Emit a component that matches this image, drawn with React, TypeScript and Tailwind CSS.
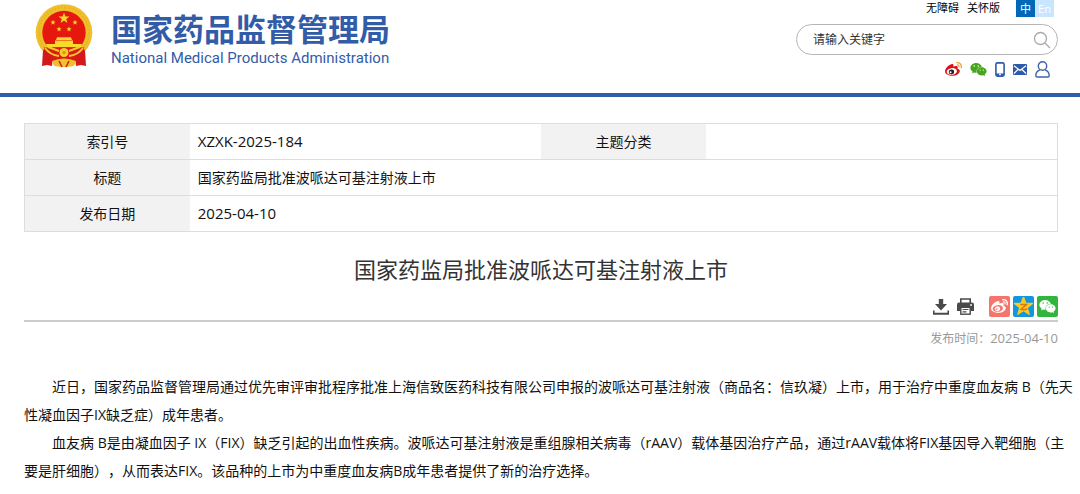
import { FaWeixin } from "react-icons/fa";

const CJK = "font-['Open_Sans','Noto_Sans_CJK_SC',sans-serif]";

const STAR =
  "M0 -10 L2.4 -3.2 L9.5 -3.1 L3.8 1.2 L5.9 8.1 L0 4 L-5.9 8.1 L-3.8 1.2 L-9.5 -3.1 L-2.4 -3.2 Z";

const WEIBO_BODY =
  "M214.8 446.7C108.5 446.7 0 395.3 0 310.4c0-44.3 28-95.4 76.3-143.7C176 67 279.5 65.8 249.9 161c-4 13.1 12.3 5.7 12.3 6 79.5-33.6 140.5-16.8 114 51.4-3.7 9.4 1.1 10.9 8.3 13.1 135.7 42.3 34.8 215.2-169.7 215.2zm143.7-146.3c-5.4-55.7-78.5-94-163.4-85.7-84.8 8.6-148.8 60.3-143.4 116s78.5 94 163.4 85.7c84.8-8.6 148.8-60.3 143.4-116zM269.4 346.1c-17.1 38.8-66.8 60-109.1 46.3-40.8-13.1-58-53.4-40.3-89.7 17.7-35.4 63.1-55.4 103.4-45.1 42 10.8 63.1 50.2 46 88.5zm-86.3-30c-12.9-5.4-30 .3-38 12.9-8.3 12.9-4.3 28 8.6 34 13.1 6 30.8.3 39.1-12.9 8-13.1 3.7-28.3-9.7-34zm32.6-13.4c-5.1-1.7-11.4.6-14.3 5.4-2.9 5.1-1.4 10.6 3.7 12.9 5.1 2 11.7-.3 14.6-5.4 2.8-5.2 1.1-10.9-4-12.9z";

const WEIBO_WAVES =
  "M407 177.6c7.6-24-13.4-46.8-37.4-41.7-22 4.8-28.8-28.1-7.1-32.8 50.1-10.9 92.3 37.1 76.5 84.8-6.8 21.2-38.8 10.8-32-10.3zM347.9 35.1c-25.9 5.6-16.8 43.7 8.3 38.3 72.3-15.2 134.8 52.8 111.7 124-7.4 24.2 29.1 37 37.4 12 31.9-99.8-55.1-195.9-157.4-174.3z";

interface WeiboIconProps {
  size: number;
  body: string;
  waves: string;
  pupil?: string;
}

function WeiboIcon({ size, body, waves, pupil }: WeiboIconProps) {
  return (
    <svg width={size} height={size} viewBox="0 0 512 512" aria-hidden="true">
      <path d={WEIBO_BODY} fill={body} />
      {pupil && (
        <ellipse cx="195" cy="328" rx="78" ry="68" fill={pupil} />
      )}
      {pupil && <circle cx="169" cy="340" r="28" fill="#fff" />}
      <path d={WEIBO_WAVES} fill={waves} />
    </svg>
  );
}

function Emblem() {
  return (
    <svg width="58" height="64" viewBox="0 0 58 64" aria-hidden="true">
      <circle cx="29" cy="28.5" r="28.300" fill="#efc02c" />
      <circle
        cx="29"
        cy="28.5"
        r="25"
        fill="none"
        stroke="#dd9a16"
        strokeWidth="2"
        strokeDasharray="1 2"
        opacity="0.45"
      />
      <circle cx="29" cy="28.5" r="21.700" fill="#e5170f" />
      <g fill="#f9d92b">
        <path d={STAR} transform="translate(29 14.300) scale(.58)" />
        <path d={STAR} transform="translate(18 18.500) scale(.28)" />
        <path d={STAR} transform="translate(40 18.500) scale(.28)" />
        <path d={STAR} transform="translate(24 25.200) scale(.28)" />
        <path d={STAR} transform="translate(34 25.200) scale(.28)" />
        <path d="M22 33.300 H36 L37 36 H21 Z" />
        <path d="M20 36.500 H38 V40 H47 L46 43.300 H12 L11 40 H20 Z" />
      </g>
      {/* ribbon and gear under the gate */}
      <path d="M9 43.500 H49 L50 54 L41 58 H17 L8 54 Z" fill="#dd1a14" />
      <path d="M8 46 L18 51 L17 62 L12 61 L7 62 Z" fill="#d3191c" />
      <path d="M50 46 L40 51 L41 62 L46 61 L51 62 Z" fill="#d3191c" />
      <path
        d="M10 44 Q15 51 24 52 M48 44 Q43 51 34 52 M13 43 L24 47 M45 43 L34 47"
        fill="none"
        stroke="#f5cb2c"
        strokeWidth="2"
      />
      <circle cx="29" cy="48.500" r="4.500" fill="#f5cb2c" />
      <circle cx="29" cy="48.500" r="1.600" fill="#d98f10" />
      <path d="M17 57 Q29 52 41 57 L39 62 Q29 64 19 62 Z" fill="#efc02c" />
      <path d="M24 57 L27 63 M34 57 L31 63" stroke="#d3191c" strokeWidth="1.500" />
    </svg>
  );
}

function SearchIcon() {
  return (
    <svg width="18" height="18" viewBox="0 0 18 18" fill="none" stroke="#aaa" strokeWidth="1.300" aria-hidden="true">
      <circle cx="7.500" cy="7.500" r="6" />
      <path d="M12 12 L17 17" />
    </svg>
  );
}

function PhoneIcon() {
  return (
    <svg width="10" height="15" viewBox="0 0 10 15" aria-hidden="true">
      <rect x=".9" y=".9" width="8.200" height="13.200" rx="1.500" fill="#fff" stroke="#2e5ba8" strokeWidth="1.600" />
      <path d="M1 11.500 H9 V14 H1 Z" fill="#2e5ba8" />
      <circle cx="5" cy="12.500" r=".9" fill="#fff" />
    </svg>
  );
}

function MailIcon() {
  return (
    <svg width="14" height="11" viewBox="0 0 14 11" aria-hidden="true">
      <rect width="14" height="11" rx="1" fill="#2e5ba8" />
      <path d="M1 1.800 L7 6.500 L13 1.800 M1 9.500 L5 5.500 M13 9.500 L9 5.500" fill="none" stroke="#fff" strokeWidth="1.200" />
    </svg>
  );
}

function UserIcon() {
  return (
    <svg width="15" height="17" viewBox="0 0 15 17" fill="none" stroke="#3f64a9" strokeWidth="1.400" aria-hidden="true">
      <circle cx="7.500" cy="5" r="4.200" />
      <path d="M4.800 8.800 C2 10 .8 12.500 .8 14.500 Q.8 16 2.200 16 H12.800 Q14.200 16 14.200 14.500 C14.200 12.500 13 10 10.200 8.800" />
    </svg>
  );
}

function DownloadIcon() {
  return (
    <svg width="16" height="16" viewBox="0 0 16 16" fill="#4a4a4a" aria-hidden="true">
      <path d="M5.800 0 H10.200 V5 H14 L8 11.500 L2 5 H5.800 Z" />
      <path d="M0 11.500 H1.600 V13.800 H14.400 V11.500 H16 V15.700 H0 Z" />
    </svg>
  );
}

function PrintIcon() {
  return (
    <svg width="17" height="17" viewBox="0 0 17 17" aria-hidden="true">
      <path d="M3.800 5 V1 H13.200 V5" fill="#fff" stroke="#4a4a4a" strokeWidth="1.600" />
      <path d="M2 4.500 H15 Q17 4.500 17 6.500 V13 H0 V6.500 Q0 4.500 2 4.500 Z" fill="#4a4a4a" />
      <circle cx="14" cy="7" r=".9" fill="#fff" />
      <rect x="3.800" y="9.300" width="9.400" height="6.900" fill="#fff" stroke="#4a4a4a" strokeWidth="1.400" />
      <path d="M5.500 11.500 H11.500 M5.500 13.800 H9.500" stroke="#4a4a4a" strokeWidth="1.200" />
    </svg>
  );
}

function QzoneIcon() {
  return (
    <svg width="19" height="19" viewBox="-10 -10 20 20" aria-hidden="true">
      <path d={STAR} fill="#fdc81f" stroke="#fdc81f" strokeWidth="1.500" strokeLinejoin="round" />
      <path d="M-3.500 -2 H3 L-2.500 3 Q1 4 4 2.500" fill="none" stroke="#d9780c" strokeWidth="1.600" />
    </svg>
  );
}

function Header() {
  return (
    <header className="flex h-[97px] items-start justify-between border-b-4 border-[#325ca7] pl-[35px] pr-[22px]">
      <a href="#" className="flex gap-[18px] pt-1 text-[#325ca7]">
        <Emblem />
        <span className="flex flex-col pt-2">
          <span className="text-[31px] leading-[34px] font-bold">
            国家药品监督管理局
          </span>
          <span className="font-[Roboto,sans-serif] text-[15px] leading-6">
            National Medical Products Administration
          </span>
        </span>
      </a>

      <div className="flex w-[262px] flex-col">
        <div className="flex justify-end gap-2 pr-1 text-[11px] leading-[15px] text-black">
          <a href="#">无障碍</a>
          <a href="#">关怀版</a>
          <div className="ml-2 flex h-[17px] text-white">
            <button className="w-[19px] bg-[#0068b7]">中</button>
            <button className="w-[19px] bg-[#c9e6ff]">En</button>
          </div>
        </div>
        <form className="mt-[7px] flex h-[31px] items-center rounded-full border border-[#b5b5b5] pr-1.5 pl-4">
          <input
            type="text"
            aria-label="请输入关键字"
            placeholder="请输入关键字"
            className="min-w-0 flex-1 text-xs outline-none placeholder:text-[#333]"
          />
          <button type="button" aria-label="搜索">
            <SearchIcon />
          </button>
        </form>
        <div className="mt-1.5 flex h-[17px] items-center justify-end gap-2 pr-2">
          <a href="#" aria-label="微博">
            <WeiboIcon size={17} body="#d2141b" waves="#f0a23a" pupil="#222" />
          </a>
          <a href="#" aria-label="微信">
            <FaWeixin size={17} color="#45a51c" />
          </a>
          <a href="#" aria-label="手机版">
            <PhoneIcon />
          </a>
          <a href="#" aria-label="邮箱">
            <MailIcon />
          </a>
          <a href="#" aria-label="个人中心">
            <UserIcon />
          </a>
        </div>
      </div>
    </header>
  );
}

function InfoTable() {
  const th = "bg-[#f2f2f2] pt-px text-center font-normal";
  const td = "px-2 pt-px";
  const row = "h-9 border border-[#ddd]";

  return (
    <table className="w-full table-fixed border-collapse text-sm text-[#111]">
      <colgroup>
        <col className="w-[16%]" />
        <col className="w-[34%]" />
        <col className="w-[16%]" />
        <col className="w-[34%]" />
      </colgroup>
      <tbody>
        <tr className={row}>
          <th className={th}>索引号</th>
          <td className={`${td} text-[15px]`}>XZXK-2025-184</td>
          <th className={th}>主题分类</th>
          <td className={td} />
        </tr>
        <tr className={row}>
          <th className={th}>标题</th>
          <td className={td} colSpan={3}>
            国家药监局批准波哌达可基注射液上市
          </td>
        </tr>
        <tr className={row}>
          <th className={th}>发布日期</th>
          <td className={`${td} text-[15px]`} colSpan={3}>
            2025-04-10
          </td>
        </tr>
      </tbody>
    </table>
  );
}

function Toolbar() {
  const share = "flex size-[21px] items-center justify-center rounded-xs";

  return (
    <div className="flex items-center justify-end gap-[3px] border-b-2 border-[#ccc] pb-[3px]">
      <div className="mr-3 flex items-center gap-2">
        <button aria-label="下载">
          <DownloadIcon />
        </button>
        <button aria-label="打印">
          <PrintIcon />
        </button>
      </div>
      <button aria-label="分享到微博" className={`${share} bg-[#f4756b]`}>
        <WeiboIcon size={17} body="#fff" waves="#fff" />
      </button>
      <button aria-label="分享到QQ空间" className={`${share} bg-[#1296e0]`}>
        <QzoneIcon />
      </button>
      <button aria-label="分享到微信" className={`${share} bg-[#32b53c]`}>
        <FaWeixin size={17} color="#fff" />
      </button>
    </div>
  );
}

export default function App() {
  return (
    <div className={`bg-white ${CJK}`} lang="zh-CN">
      <Header />
      <main className="pt-[26px] pr-[22px] pl-6">
        <InfoTable />
        <h1 className="mt-5 text-center text-[22px] leading-[34px] text-[#333]">
          国家药监局批准波哌达可基注射液上市
        </h1>
        <div className="mt-2.5">
          <Toolbar />
        </div>
        <p className="mt-2 text-right text-xs leading-4 text-[#999]">
          发布时间：<span className="text-[13px]">2025-04-10</span>
        </p>
        <article className="mt-[26px] text-sm leading-7 whitespace-nowrap text-[#111] [text-spacing-trim:space-all]">
          <p className="indent-7">
            近日，国家药品监督管理局通过优先审评审批程序批准上海信致医药科技有限公司申报的波哌达可基注射液（商品名：信玖凝）上市，用于治疗中重度血友病 B（先天
            <br />
            性凝血因子IX缺乏症）成年患者。
          </p>
          <p className="indent-7">
            血友病 B是由凝血因子 IX（FIX）缺乏引起的出血性疾病。波哌达可基注射液是重组腺相关病毒（rAAV）载体基因治疗产品，通过rAAV载体将FIX基因导入靶细胞（主
            <br />
            要是肝细胞），从而表达FIX。该品种的上市为中重度血友病B成年患者提供了新的治疗选择。
          </p>
        </article>
      </main>
    </div>
  );
}
